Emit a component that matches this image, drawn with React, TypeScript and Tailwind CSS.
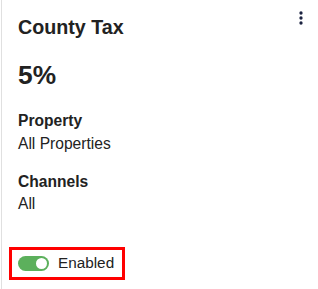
export default function App() {
  return (
    <div className="w-[318px] h-[289px] bg-white pl-px" style={{ fontFamily: '"Liberation Sans", Arial, sans-serif' }}>
      <div className="h-full border-l border-[#e0e0e0] relative pl-[16px] text-[#222]">
        <button className="absolute right-[7px] top-[8px] w-5 h-5 text-[#1b2240]">
          <svg viewBox="0 0 24 24" className="w-5 h-5" fill="currentColor">
            <circle cx="12" cy="6" r="2" />
            <circle cx="12" cy="12" r="2" />
            <circle cx="12" cy="18" r="2" />
          </svg>
        </button>
        <div className="pt-[15px] text-[19.7px] leading-[24px] font-bold">County Tax</div>
        <div className="mt-[20px] text-[26.3px] leading-[32px] font-bold">5%</div>
        <div className="mt-[19px] text-[15.6px] leading-[22.5px]">
          <div className="font-bold">Property</div>
          <div>All Properties</div>
        </div>
        <div className="mt-[15.5px] text-[15.6px] leading-[22.5px]">
          <div className="font-bold">Channels</div>
          <div>All</div>
        </div>
        <div className="mt-[31px] -ml-[9px] w-[116px] h-[33px] border-[3px] border-[#ff0000] flex items-center pl-[6px]">
          <div className="w-[31px] h-[15px] rounded-full bg-[#5cb05c] relative">
            <div className="absolute right-[2px] top-[2px] w-[11px] h-[11px] rounded-full bg-white" />
          </div>
          <span className="ml-[9px] text-[15.3px] leading-[20px]">Enabled</span>
        </div>
      </div>
    </div>
  );
}
